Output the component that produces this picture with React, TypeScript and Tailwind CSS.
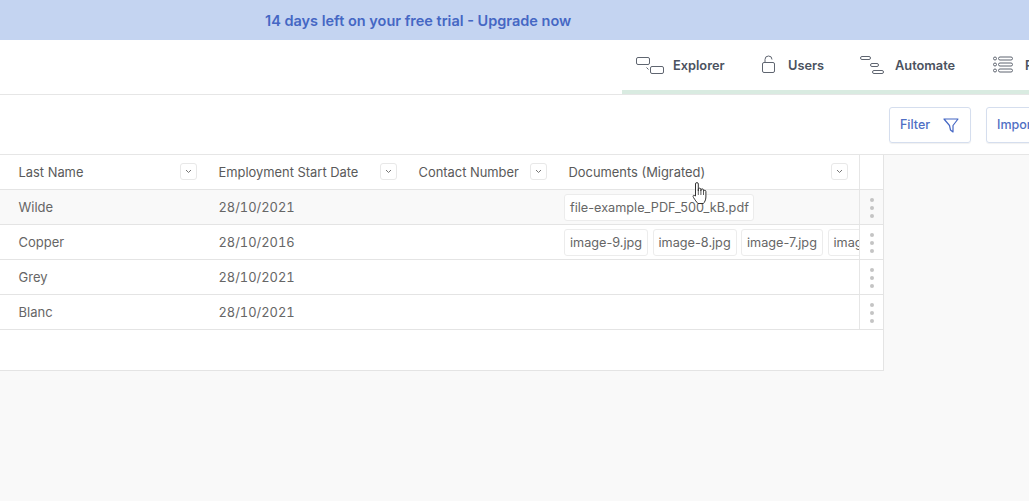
import React from "react";

const Chevron = () => (
  <span className="flex h-[17px] w-[17px] shrink-0 items-center justify-center rounded-[3px] border border-[#e8e8e8] bg-white">
    <svg width="7" height="5" viewBox="0 0 7 5" fill="none" stroke="#777" strokeWidth="1">
      <path d="M1 1l2.5 2.5L6 1" />
    </svg>
  </span>
);

const HeadCell = ({ label, w, pad }: { label: string; w: string; pad: string }) => (
  <div className={`flex shrink-0 items-center justify-between ${w} ${pad}`}>
    <span className="whitespace-nowrap pt-[2px] text-[12.9px]">{label}</span>
    <Chevron />
  </div>
);

const Tag = ({ children, w }: { children: React.ReactNode; w: string }) => (
  <span className={`flex h-[27px] shrink-0 items-center whitespace-nowrap rounded-[3px] border border-[#ececec] bg-white pl-[5px] pt-[1px] text-[12.7px] text-[#666] ${w}`}>
    {children}
  </span>
);

const Dots = () => (
  <div className="flex h-full w-[24px] shrink-0 flex-col items-center justify-center gap-[4px] border-l border-[#e6e6e6] pt-[1px]">
    <i className="block h-[4px] w-[4px] rounded-full bg-[#c4c4c4]" />
    <i className="block h-[4px] w-[4px] rounded-full bg-[#c4c4c4]" />
    <i className="block h-[4px] w-[4px] rounded-full bg-[#c4c4c4]" />
  </div>
);

const Row = ({ name, date, shade, children }: { name: string; date: string; shade?: boolean; children?: React.ReactNode }) => (
  <div className={`flex h-[35px] shrink-0 items-center border-b border-[#e4e4e4] ${shade ? "bg-[#f9f9f9]" : "bg-white"}`}>
    <div className="w-[218.5px] shrink-0 pl-[18.5px] pt-[2px]">{name}</div>
    <div className="w-[345.5px] shrink-0 pt-[2px] text-[12.9px] tabular-nums">{date}</div>
    <div className="flex h-full w-[295px] shrink-0 items-center gap-[4.5px] overflow-hidden pt-[1px]">{children}</div>
    <Dots />
  </div>
);

const NavItem = ({ icon, label, w }: { icon: React.ReactNode; label: string; w: string }) => (
  <div className={`flex shrink-0 items-center ${w}`}>
    {icon}
    <span className="pt-[2px]">{label}</span>
  </div>
);

const ic = { fill: "none", stroke: "#5f6570", strokeWidth: 1 };

export default function App() {
  return (
    <div className="flex h-[501px] w-[1029px] flex-col overflow-hidden bg-[#f9f9f9] font-['Inter',sans-serif] text-[13px] text-[#666]">
      <div className="flex h-[40px] shrink-0 items-center bg-[#c4d4f1] pl-[265px] pt-[2px] text-[14.5px] font-semibold text-[#4567c4]">
        14 days left on your free trial - Upgrade now
      </div>

      <div className="flex h-[55px] shrink-0 flex-col border-b border-[#e6e6e6] bg-white">
        <div className="flex h-[50px] items-center justify-start pl-[635px] text-[12.8px] font-semibold text-[#4b5260]">
          <NavItem
            w="w-[125px]"
            label="Explorer"
            icon={
              <svg width="38" height="20" viewBox="0 0 38 20" className="shrink-0" {...ic}>
                <rect x="1.5" y="2.5" width="13" height="7" rx="1.5" />
                <rect x="15.5" y="11.5" width="13" height="7" rx="1.5" />
                <path d="M11.5 12.5l2 2" />
              </svg>
            }
          />
          <NavItem
            w="w-[100px]"
            label="Users"
            icon={
              <svg width="28" height="20" viewBox="0 0 28 20" className="shrink-0" {...ic}>
                <rect x="2.5" y="7.5" width="12" height="10" rx="1.5" />
                <path d="M5 7.5V4.5a3.5 3.5 0 0 1 7 0" />
              </svg>
            }
          />
          <NavItem
            w="w-[133px]"
            label="Automate"
            icon={
              <svg width="35" height="20" viewBox="0 0 35 20" className="shrink-0" {...ic}>
                <rect x="0.5" y="1.5" width="10" height="3" rx="1.5" />
                <rect x="10.5" y="8.5" width="8" height="3" rx="1.5" />
                <rect x="12.5" y="15.5" width="11" height="3" rx="1.5" />
              </svg>
            }
          />
          <NavItem
            w="w-[40px]"
            label="Reports"
            icon={
              <svg width="32" height="20" viewBox="0 0 32 20" className="shrink-0" {...ic}>
                <circle cx="2" cy="3.5" r="1.5" />
                <circle cx="2" cy="9.5" r="1.5" />
                <circle cx="2" cy="15.5" r="1.5" />
                <rect x="5.5" y="2" width="14" height="3" rx="1.5" />
                <rect x="5.5" y="8" width="14" height="3" rx="1.5" />
                <rect x="5.5" y="14" width="14" height="3" rx="1.5" />
              </svg>
            }
          />
        </div>
        <div className="ml-[622px] h-[4px] bg-[#d9ebe1]" />
      </div>

      <div className="flex h-[60px] shrink-0 items-center gap-[15px] border-b border-[#e6e6e6] bg-white pl-[889px] text-[12.5px] font-medium text-[#4f6fc4]">
        <div className="flex h-[36px] w-[82px] shrink-0 items-center justify-between rounded-[3px] border border-[#d5deee] pl-[10px] pr-[11px] shadow-[0_1px_1px_rgba(0,0,0,0.06)]">
          <span className="pt-[2px]">Filter</span>
          <svg width="16" height="16" viewBox="0 0 16 16" fill="none" stroke="#4567c4" strokeWidth="1.2" strokeLinejoin="round">
            <path d="M1 2h14L10 8.5V15L7.5 13 6.5 8.5z" />
          </svg>
        </div>
        <div className="flex h-[36px] w-[80px] shrink-0 items-center rounded-[3px] border border-[#d5deee] pl-[10px] pt-[2px] shadow-[0_1px_1px_rgba(0,0,0,0.06)]">
          Import
        </div>
      </div>

      <div className="relative flex h-[216px] w-[884px] shrink-0 flex-col border-r border-b border-[#e4e4e4] bg-white">
        <div className="flex h-[35px] shrink-0 items-center border-b border-[#e4e4e4] text-[#5a5a5a]">
          <HeadCell label="Last Name" w="w-[218px]" pad="pl-[18.5px] pr-[21px]" />
          <HeadCell label="Employment Start Date" w="w-[200px]" pad="pl-[0.5px] pr-[21px]" />
          <HeadCell label="Contact Number" w="w-[150px]" pad="pl-[0.5px] pr-[21px]" />
          <HeadCell label="Documents (Migrated)" w="w-[291px]" pad="pl-[0.5px] pr-[11px]" />
          <div className="h-full w-[24px] shrink-0 border-l border-[#e6e6e6]" />
        </div>
        <Row name="Wilde" date="28/10/2021" shade>
          <Tag w="w-[190px]">file-example_PDF_500_kB.pdf</Tag>
        </Row>
        <Row name="Copper" date="28/10/2016">
          <Tag w="w-[84px]">image-9.jpg</Tag>
          <Tag w="w-[84px]">image-8.jpg</Tag>
          <Tag w="w-[82px]">image-7.jpg</Tag>
          <Tag w="w-[84px]">image-6.jpg</Tag>
        </Row>
        <Row name="Grey" date="28/10/2021" />
        <Row name="Blanc" date="28/10/2021" />

        <svg className="absolute left-[690px] top-[25px]" width="20" height="26" viewBox="0 0 20 24" fill="#fff" stroke="#333" strokeWidth="1" strokeLinejoin="round">
          <path d="M5.5 15V3a1.4 1.4 0 0 1 2.8 0v7l0-1.5a1.3 1.3 0 0 1 2.6 0V10l0-.8a1.3 1.3 0 0 1 2.6 0v1.3a1.2 1.2 0 0 1 2.4 0V16c0 3-1.5 5.5-2.5 6.5H8C6.5 21 5 19 3.5 16.5 2.6 15 3 13.5 5.5 15z" />
          <path d="M8.3 10v4M10.9 10v4M13.5 10.5v3.5" fill="none" strokeWidth="0.8" />
        </svg>
      </div>
    </div>
  );
}
